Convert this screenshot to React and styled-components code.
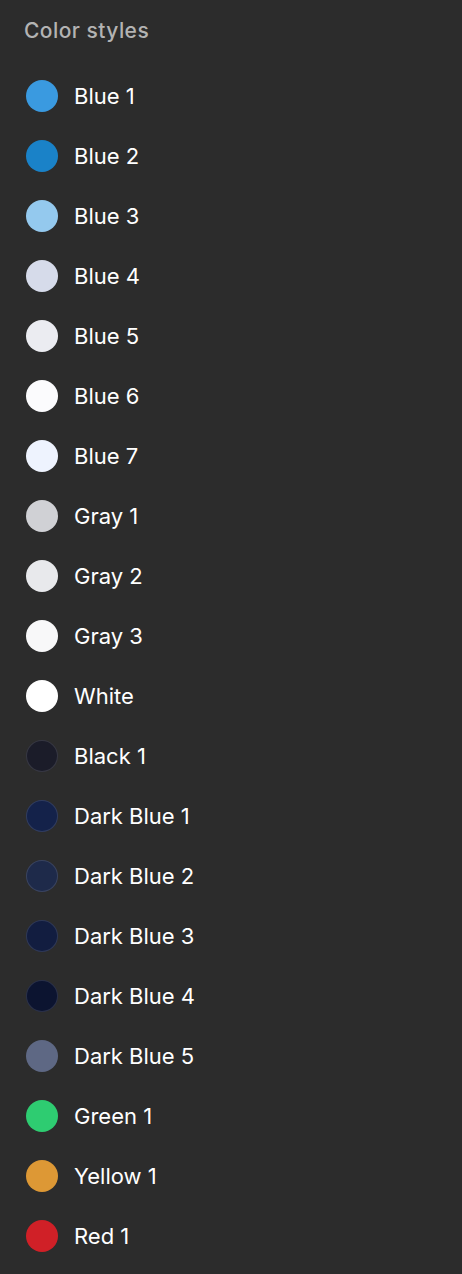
import React from "react";
import styled, { createGlobalStyle } from "styled-components";

const Global = createGlobalStyle`
  html, body { margin: 0; padding: 0; background: #2c2c2c; }
  body { font-family: Inter, "Noto Sans", sans-serif; -webkit-font-smoothing: antialiased; }
`;

const Panel = styled.div`
  width: 462px;
  min-height: 1274px;
  box-sizing: border-box;
  background: #2c2c2c;
  padding: 17px 24px 0 24px;
`;

const Title = styled.h2`
  margin: 0;
  font-size: 21px;
  font-weight: 500;
  letter-spacing: 0.45px;
  line-height: 28px;
  color: #b3b3b3;
`;

const List = styled.ul`
  list-style: none;
  margin: 21px 0 0 0;
  padding: 0;
  display: flex;
  flex-direction: column;
`;

const Row = styled.li`
  height: 60px;
  display: flex;
  align-items: center;
  gap: 16px;
  padding-left: 2px;
`;

const Swatch = styled.span`
  width: 32px;
  height: 32px;
  border-radius: 50%;
  flex: none;
  box-sizing: border-box;
  background: ${(p) => p.$color};
  border: ${(p) => (p.$outlined ? "1px solid rgba(255,255,255,0.12)" : "none")};
`;

const Label = styled.span`
  font-size: 22px;
  font-weight: 400;
  color: #ffffff;
  line-height: 28px;
`;

const colors = [
  ["Blue 1", "#3a9ae0"],
  ["Blue 2", "#1a82c8"],
  ["Blue 3", "#94c9ee"],
  ["Blue 4", "#d6dbea"],
  ["Blue 5", "#ebecf1"],
  ["Blue 6", "#fbfbfd"],
  ["Blue 7", "#eef3fe"],
  ["Gray 1", "#d0d1d5"],
  ["Gray 2", "#e8e9ec"],
  ["Gray 3", "#f8f8f9"],
  ["White", "#ffffff"],
  ["Black 1", "#1b1c29", true],
  ["Dark Blue 1", "#14224a", true],
  ["Dark Blue 2", "#1e2a4a", true],
  ["Dark Blue 3", "#121d40", true],
  ["Dark Blue 4", "#0c1430", true],
  ["Dark Blue 5", "#5e6884"],
  ["Green 1", "#2ecc71"],
  ["Yellow 1", "#dd9835"],
  ["Red 1", "#d02027"],
];

export default function App() {
  return (
    <>
      <Global />
      <Panel>
        <Title>Color styles</Title>
        <List>
          {colors.map(([name, c, outlined]) => (
            <Row key={name}>
              <Swatch $color={c} $outlined={outlined} />
              <Label>{name}</Label>
            </Row>
          ))}
        </List>
      </Panel>
    </>
  );
}
